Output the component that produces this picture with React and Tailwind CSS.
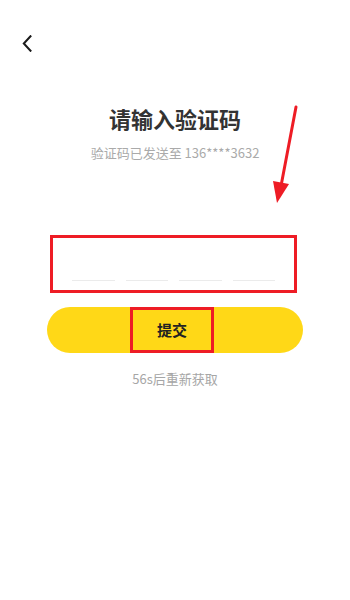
import React from 'react';

const cjk = { fontFamily: '"Noto Sans CJK SC", "Noto Sans", sans-serif' };

const App = () => {
  return (
    <div className="relative w-[350px] h-[600px] bg-white overflow-hidden" style={cjk}>
      <div className="pt-[35px] pl-[22px] h-[103px]">
        <svg width="10" height="17" viewBox="0 0 10 17" fill="none">
          <path d="M8.5 1.2 L1.8 8.5 L8.5 15.8" stroke="#1a1a1a" strokeWidth="2" strokeLinecap="square" />
        </svg>
      </div>

      <h1 className="text-center text-[22px] leading-[30px] font-bold text-[#333333]">请输入验证码</h1>
      <p className="mt-[10px] text-center text-[13px] leading-[20px] text-[#aaaaaa]">验证码已发送至 136****3632</p>

      <div className="mt-[72px] ml-[50px] w-[247px] h-[58px] border-[3px] border-[#ee1c25] flex items-end pb-[9px] px-[19px] gap-[11px]">
        <span className="flex-1 h-[1px] bg-[#ebebeb]" />
        <span className="flex-1 h-[1px] bg-[#ebebeb]" />
        <span className="flex-1 h-[1px] bg-[#ebebeb]" />
        <span className="flex-1 h-[1px] bg-[#ebebeb]" />
      </div>

      <div className="mt-[14px] mx-[47px] h-[46px] rounded-full bg-[#ffd817] flex">
        <span className="ml-[83px] w-[84px] h-[46px] border-[3px] border-[#ee1c25] flex items-center justify-center text-[15px] font-bold text-[#222222]">提交</span>
      </div>

      <p className="mt-[16px] text-center text-[13px] leading-[20px] text-[#a6a6a6]">56s后重新获取</p>

      <svg className="absolute left-0 top-0" width="350" height="600" viewBox="0 0 350 600" fill="none">
        <path d="M296 107 L281 186" stroke="#ee1c25" strokeWidth="3" strokeLinecap="round" />
        <path d="M273 181 L289 184 L277 203 Z" fill="#ee1c25" />
      </svg>
    </div>
  );
};

export default App;
